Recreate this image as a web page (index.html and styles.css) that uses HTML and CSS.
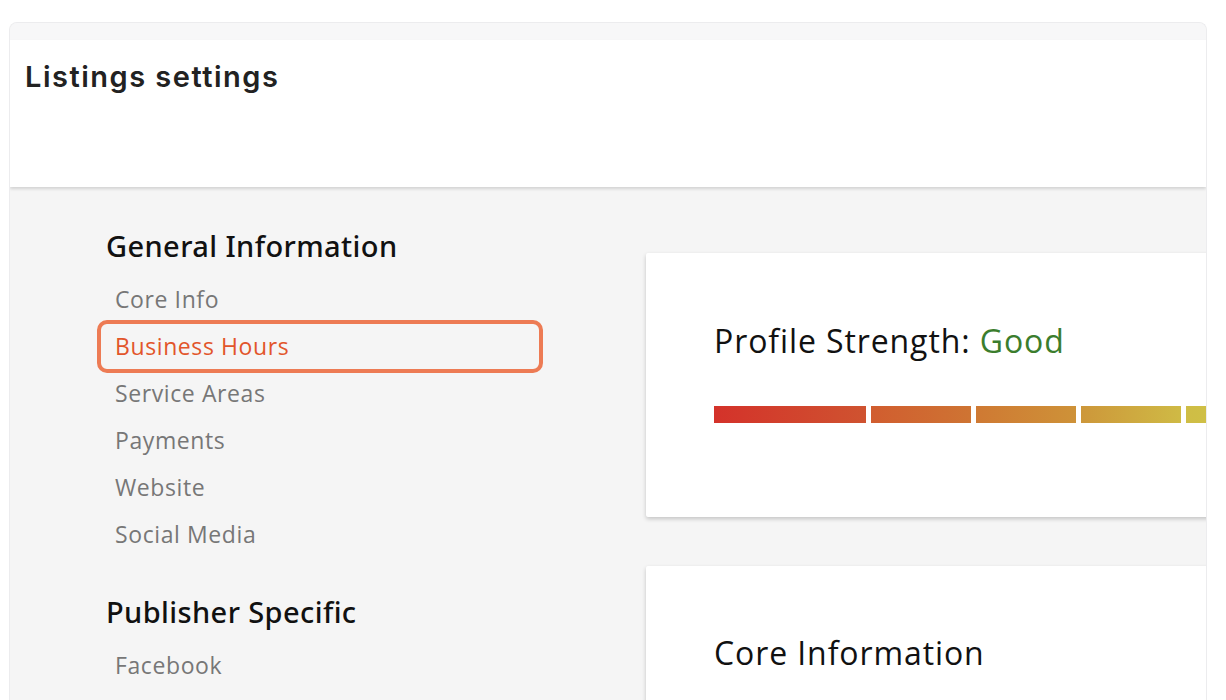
FILE: index.html
```
<!DOCTYPE html>
<html lang="en">
<head>
    <meta charset="UTF-8">
    <meta name="viewport" content="width=device-width, initial-scale=1.0">
    <title>Listings settings</title>
    <link rel="stylesheet" href="styles.css">
</head>
<body>
    <div class="frame">
        <div class="frame-top"></div>
        <header class="page-header">
            <h1>Listings settings</h1>
        </header>
        <div class="content">
            <nav class="sidebar">
                <h2>General Information</h2>
                <ul class="nav-list">
                    <li>Core Info</li>
                    <li class="active">Business Hours</li>
                    <li>Service Areas</li>
                    <li>Payments</li>
                    <li>Website</li>
                    <li>Social Media</li>
                </ul>
                <h2 class="section-gap">Publisher Specific</h2>
                <ul class="nav-list">
                    <li>Facebook</li>
                </ul>
            </nav>
            <main class="cards">
                <section class="card strength-card">
                    <h3>Profile Strength: <span class="good">Good</span></h3>
                    <div class="strength-bar">
                        <div class="seg seg1"></div>
                        <div class="seg seg2"></div>
                        <div class="seg seg3"></div>
                        <div class="seg seg4"></div>
                        <div class="seg seg5"></div>
                    </div>
                </section>
                <section class="card core-card">
                    <h3>Core Information</h3>
                </section>
            </main>
        </div>
    </div>
</body>
</html>
```
FILE: styles.css
```
body {
    margin: 0;
    padding: 22px 0 0 9px;
    background: #fff;
    font-family: 'Open Sans', 'Noto Sans', sans-serif;
    height: 678px;
    overflow: hidden;
}

.frame {
    width: 1196px;
    height: 700px;
    border: 1px solid #ececee;
    border-bottom: none;
    border-radius: 8px 8px 0 0;
    background: #f5f5f5;
    overflow: hidden;
}

.frame-top {
    height: 17px;
    background: #f7f7f8;
}

.page-header {
    height: 147px;
    background: #fff;
    box-shadow: 0 2px 3px rgba(0, 0, 0, 0.14);
    position: relative;
    padding-left: 15px;
    box-sizing: border-box;
    padding-top: 21px;
}

.page-header h1 {
    margin: 0;
    font-family: 'Inter', 'Lato', sans-serif;
    font-weight: 600;
    font-size: 29px;
    line-height: 32px;
    color: #222;
    letter-spacing: 1.5px;
}

.content {
    display: grid;
    grid-template-columns: 636px 1fr;
}

.sidebar {
    padding: 41px 0 0 96px;
}

.sidebar h2 {
    margin: 0 0 12px;
    font-family: 'Noto Sans', 'Open Sans', sans-serif;
    font-size: 29px;
    font-weight: 500;
    line-height: 36px;
    letter-spacing: 0.4px;
    color: #111;
}

.sidebar h2.section-gap {
    margin-top: 36px;
}

.nav-list {
    list-style: none;
    margin: 0 0 0 -9px;
    padding: 0;
    width: 446px;
}

.nav-list li {
    padding: 0 14px;
    border: 4px solid transparent;
    border-radius: 10px;
    font-size: 23px;
    line-height: 39px;
    letter-spacing: 0.6px;
    color: #777;
}

.nav-list li.active {
    border-color: #ed7b54;
    color: #e2552b;
    padding: 3px 14px;
    margin: -3px 0;
}

.cards {
    padding-top: 66px;
}

.card {
    width: 700px;
    background: #fff;
    border-radius: 2px;
    box-shadow: 0 2px 4px rgba(0, 0, 0, 0.2);
    padding-left: 68px;
    box-sizing: border-box;
}

.card h3 {
    margin: 0;
    font-size: 32px;
    font-weight: 400;
    line-height: 40px;
    letter-spacing: 0.9px;
    color: #111;
}

.strength-card {
    height: 264px;
    padding-top: 68px;
}

.good {
    color: #3b7d2d;
}

.strength-bar {
    display: flex;
    gap: 5px;
    margin-top: 45px;
}

.seg {
    height: 17px;
    width: 99px;
    flex: none;
}

.seg1 {
    width: 152px;
    background: linear-gradient(90deg, #d4322a, #cf5330);
}

.seg2 {
    width: 100px;
    background: linear-gradient(90deg, #d15d2f, #ce7433);
}

.seg3 {
    width: 100px;
    background: linear-gradient(90deg, #cf7933, #ce9238);
}

.seg4 {
    width: 100px;
    background: linear-gradient(90deg, #cd973a, #cfba45);
}

.seg5 {
    width: 100px;
    background: linear-gradient(90deg, #cfbd45, #cfc94a);
}

.core-card {
    margin-top: 49px;
    height: 200px;
    padding-top: 67px;
}
```
